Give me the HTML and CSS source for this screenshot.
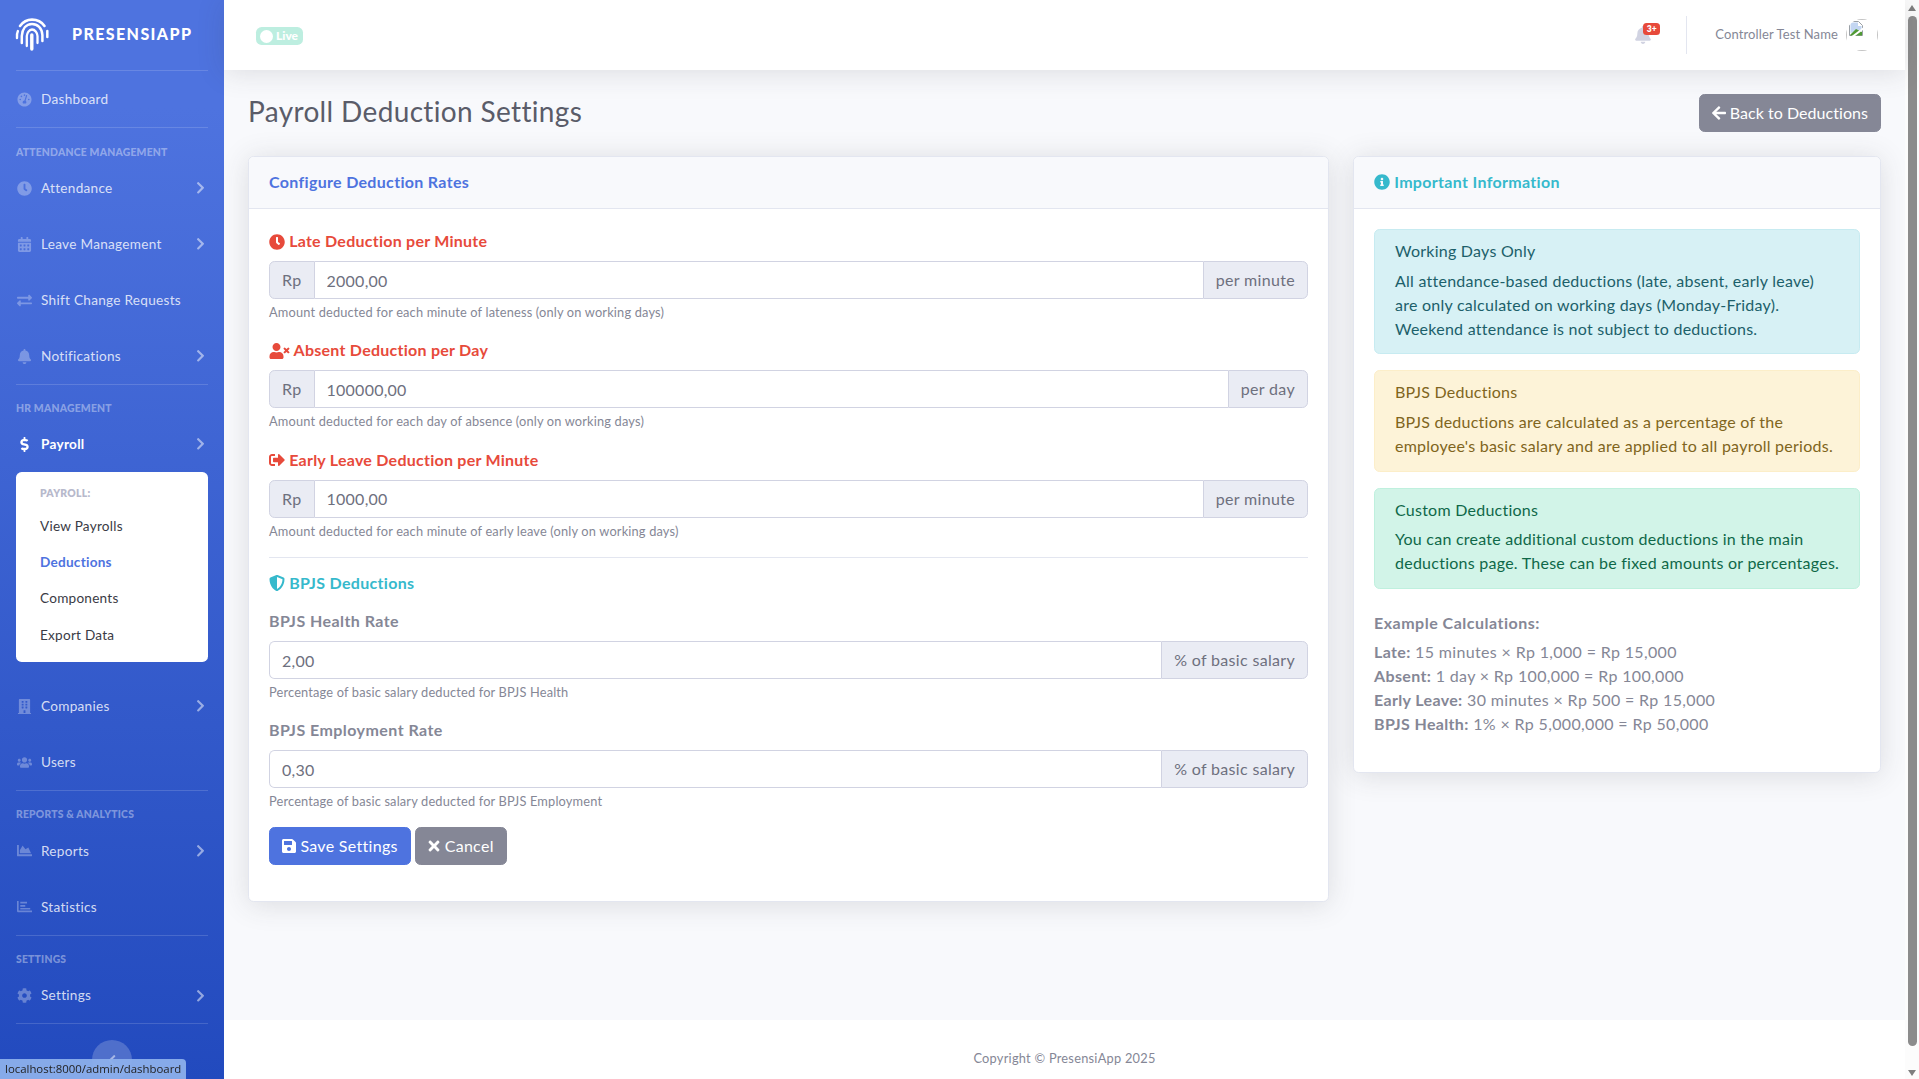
FILE: index.html
```html
<!DOCTYPE html>
<html lang="en">
<head>
<meta charset="utf-8">
<title>Payroll Deduction Settings</title>
<link rel="stylesheet" href="styles.css">
</head>
<body>
<svg class="defs" aria-hidden="true">
<symbol id="i-chev" viewBox="0 0 320 512"><path d="M285.476 272.971L91.132 467.314c-9.373 9.373-24.569 9.373-33.941 0l-22.667-22.667c-9.357-9.357-9.375-24.522-.04-33.901L188.505 256 34.484 101.255c-9.335-9.379-9.317-24.544.04-33.901l22.667-22.667c9.373-9.373 24.569-9.373 33.941 0L285.475 239.03c9.373 9.372 9.373 24.568.001 33.941z"/></symbol>
<symbol id="i-clock" viewBox="0 0 512 512"><path d="M256,8C119,8,8,119,8,256S119,504,256,504,504,393,504,256,393,8,256,8Zm92.49,313h0l-20,25a16,16,0,0,1-22.49,2.5h0l-67-49.72a40,40,0,0,1-15-31.23V112a16,16,0,0,1,16-16h32a16,16,0,0,1,16,16V256l58,42.5A16,16,0,0,1,348.49,321Z"/></symbol>
<symbol id="i-bell" viewBox="0 0 448 512"><path d="M224 512c35.32 0 63.97-28.65 63.97-64H160.03c0 35.35 28.65 64 63.97 64zm215.39-149.71c-19.32-20.76-55.47-51.99-55.47-154.29 0-77.7-54.48-139.9-127.94-155.16V32c0-17.67-14.32-32-31.98-32s-31.98 14.33-31.98 32v20.84C118.56 68.1 64.08 130.3 64.08 208c0 102.3-36.15 133.53-55.47 154.29-6 6.45-8.66 14.16-8.61 21.71.11 16.4 12.98 32 32.1 32h383.8c19.12 0 32-15.6 32.1-32 .05-7.55-2.61-15.27-8.61-21.71z"/></symbol>
<symbol id="i-save" viewBox="0 0 448 512"><path d="M433.941 129.941l-83.882-83.882A48 48 0 0 0 316.118 32H48C21.49 32 0 53.49 0 80v352c0 26.51 21.49 48 48 48h352c26.51 0 48-21.49 48-48V163.882a48 48 0 0 0-14.059-33.941zM224 416c-35.346 0-64-28.654-64-64 0-35.346 28.654-64 64-64s64 28.654 64 64c0 35.346-28.654 64-64 64zm96-304.52V212c0 6.627-5.373 12-12 12H76c-6.627 0-12-5.373-12-12V108c0-6.627 5.373-12 12-12h228.52c3.183 0 6.235 1.264 8.485 3.515l3.48 3.48A11.996 11.996 0 0 1 320 111.48z"/></symbol>
<symbol id="i-info" viewBox="0 0 512 512"><path d="M256 8C119.043 8 8 119.083 8 256c0 136.997 111.043 248 248 248s248-111.003 248-248C504 119.083 392.957 8 256 8zm0 110c23.196 0 42 18.804 42 42s-18.804 42-42 42-42-18.804-42-42 18.804-42 42-42zm56 254c0 6.627-5.373 12-12 12h-88c-6.627 0-12-5.373-12-12v-24c0-6.627 5.373-12 12-12h12v-64h-12c-6.627 0-12-5.373-12-12v-24c0-6.627 5.373-12 12-12h64c6.627 0 12 5.373 12 12v100h12c6.627 0 12 5.373 12 12v24z"/></symbol>
<symbol id="i-left" viewBox="0 0 448 512"><path d="M257.5 445.1l-22.2 22.2c-9.4 9.4-24.6 9.4-33.9 0L7 273c-9.4-9.4-9.4-24.6 0-33.9L201.4 44.7c9.4-9.4 24.6-9.4 33.9 0l22.2 22.2c9.5 9.5 9.3 25-.4 34.3L136.6 216H424c13.3 0 24 10.7 24 24v32c0 13.3-10.7 24-24 24H136.6l120.5 114.8c9.8 9.3 10 24.8.4 34.3z"/></symbol>
<symbol id="i-times" viewBox="0 0 352 512"><path d="M242.72 256l100.07-100.07c12.28-12.28 12.28-32.19 0-44.48l-22.24-22.24c-12.28-12.28-32.19-12.28-44.48 0L176 189.28 75.93 89.21c-12.28-12.28-32.19-12.28-44.48 0L9.21 111.45c-12.28 12.28-12.28 32.19 0 44.48L109.28 256 9.21 356.07c-12.28 12.28-12.28 32.19 0 44.48l22.24 22.24c12.28 12.28 32.2 12.28 44.48 0L176 322.72l100.07 100.07c12.28 12.28 32.2 12.28 44.48 0l22.24-22.24c12.28-12.28 12.28-32.19 0-44.48L242.72 256z"/></symbol>
<symbol id="i-out" viewBox="0 0 512 512"><path d="M497 273L329 441c-15 15-41 4.5-41-17v-96H152c-13.3 0-24-10.7-24-24v-96c0-13.3 10.7-24 24-24h136V88c0-21.4 25.9-32 41-17l168 168c9.3 9.4 9.3 24.6 0 34zM192 436v-40c0-6.6-5.4-12-12-12H96c-17.7 0-32-14.3-32-32V160c0-17.7 14.3-32 32-32h84c6.6 0 12-5.4 12-12V76c0-6.6-5.4-12-12-12H96c-53 0-96 43-96 96v192c0 53 43 96 96 96h84c6.6 0 12-5.4 12-12z"/></symbol>
<symbol id="i-userx" viewBox="0 0 640 512"><path d="M589.6 240l45.6-45.6c6.3-6.3 6.3-16.5 0-22.8l-22.8-22.8c-6.3-6.3-16.5-6.3-22.8 0L544 194.4l-45.6-45.6c-6.3-6.3-16.5-6.3-22.8 0l-22.8 22.8c-6.3 6.3-6.3 16.5 0 22.8l45.6 45.6-45.6 45.6c-6.3 6.3-6.3 16.5 0 22.8l22.8 22.8c6.3 6.3 16.5 6.3 22.8 0l45.6-45.6 45.6 45.6c6.3 6.3 16.5 6.3 22.8 0l22.8-22.8c6.3-6.3 6.3-16.5 0-22.8L589.6 240zM224 256c70.7 0 128-57.3 128-128S294.7 0 224 0 96 57.3 96 128s57.3 128 128 128zm89.6 32h-16.7c-22.2 10.2-46.9 16-72.9 16s-50.6-5.8-72.9-16h-16.7C60.2 288 0 348.2 0 422.4V464c0 26.5 21.5 48 48 48h352c26.5 0 48-21.5 48-48v-41.6c0-74.2-60.2-134.4-134.4-134.4z"/></symbol>
<symbol id="i-shield" viewBox="0 0 512 512"><path d="M466.5 83.7l-192-80a48.15 48.15 0 0 0-36.9 0l-192 80C27.7 91.1 16 108.6 16 128c0 198.5 114.5 335.7 221.5 380.3 11.8 4.9 25.1 4.9 36.9 0C360.1 472.6 496 349.3 496 128c0-19.4-11.7-36.9-29.5-44.3zM256.1 446.3l-.1-381 175.9 73.3c-3.3 151.4-82.1 261.1-175.8 307.7z"/></symbol>
<symbol id="i-gauge" viewBox="0 0 512 512"><path d="M256 16C123.5 16 16 123.5 16 256s107.5 240 240 240 240-107.5 240-240S388.5 16 256 16zm0 64a28 28 0 1 1 0 56 28 28 0 0 1 0-56zM110 284a28 28 0 1 1 0-56 28 28 0 0 1 0 56zm40-106a28 28 0 1 1 0-56 28 28 0 0 1 0 56zm196-46l-52 168c16 11 26 29 26 50 0 16-6 30-16 41H208c-10-11-16-25-16-41 0-35 28-63 63-64l52-166c3-11 15-17 26-14 11 4 17 15 13 26zm56 152a28 28 0 1 1 0-56 28 28 0 0 1 0 56z"/></symbol>
<symbol id="i-cal" viewBox="0 0 448 512"><path d="M0 464c0 26.5 21.5 48 48 48h352c26.5 0 48-21.5 48-48V192H0v272zm320-196c0-6.6 5.4-12 12-12h40c6.6 0 12 5.4 12 12v40c0 6.6-5.4 12-12 12h-40c-6.6 0-12-5.4-12-12v-40zm0 128c0-6.6 5.4-12 12-12h40c6.6 0 12 5.4 12 12v40c0 6.6-5.4 12-12 12h-40c-6.6 0-12-5.4-12-12v-40zM192 268c0-6.6 5.4-12 12-12h40c6.6 0 12 5.4 12 12v40c0 6.6-5.4 12-12 12h-40c-6.6 0-12-5.4-12-12v-40zm0 128c0-6.6 5.4-12 12-12h40c6.6 0 12 5.4 12 12v40c0 6.6-5.4 12-12 12h-40c-6.6 0-12-5.4-12-12v-40zM64 268c0-6.6 5.4-12 12-12h40c6.6 0 12 5.4 12 12v40c0 6.6-5.4 12-12 12H76c-6.6 0-12-5.4-12-12v-40zm0 128c0-6.6 5.4-12 12-12h40c6.6 0 12 5.4 12 12v40c0 6.6-5.4 12-12 12H76c-6.6 0-12-5.4-12-12v-40zM400 64h-48V16c0-8.8-7.2-16-16-16h-32c-8.8 0-16 7.2-16 16v48H160V16c0-8.8-7.2-16-16-16h-32c-8.8 0-16 7.2-16 16v48H48C21.5 64 0 85.5 0 112v48h448v-48c0-26.5-21.5-48-48-48z"/></symbol>
<symbol id="i-swap" viewBox="0 0 512 512"><path d="M0 168v-16c0-13.255 10.745-24 24-24h360V80c0-21.367 25.899-32.042 40.971-16.971l80 80c9.372 9.373 9.372 24.569 0 33.941l-80 80C409.956 271.982 384 261.456 384 240v-48H24c-13.255 0-24-10.745-24-24zm488 152H128v-48c0-21.314-25.862-32.08-40.971-16.971l-80 80c-9.372 9.373-9.372 24.569 0 33.941l80 80C102.057 463.997 128 453.437 128 432v-48h360c13.255 0 24-10.745 24-24v-16c0-13.255-10.745-24-24-24z"/></symbol>
<symbol id="i-dollar" viewBox="0 0 288 512"><path d="M209.2 233.4l-108-31.6C88.7 198.2 80 186.5 80 173.5c0-16.3 13.2-29.5 29.5-29.5h66.3c12.2 0 24.2 3.7 34.2 10.5 6.1 4.1 14.3 3.1 19.5-2l34.8-34c7.1-6.9 6.1-18.4-1.8-24.5C238 74.8 207.4 64.1 176 64V16c0-8.8-7.2-16-16-16h-32c-8.8 0-16 7.2-16 16v48h-2.5C45.8 64-5.4 118.7.5 183.6c4.2 46.1 39.4 83.6 83.8 96.6l102.5 30c12.5 3.7 21.2 15.3 21.2 28.3 0 16.3-13.2 29.5-29.5 29.5h-66.3C100 368 88 364.3 78 357.5c-6.1-4.1-14.3-3.1-19.5 2l-34.8 34c-7.1 6.9-6.1 18.4 1.8 24.5 24.5 19.2 55.1 29.9 86.5 30v48c0 8.8 7.2 16 16 16h32c8.8 0 16-7.2 16-16v-48.2c46.6-.9 90.3-28.6 105.7-72.7 21.5-61.6-14.6-124.8-72.5-141.7z"/></symbol>
<symbol id="i-build" viewBox="0 0 448 512"><path d="M436 480h-20V24c0-13.255-10.745-24-24-24H56C42.745 0 32 10.745 32 24v456H12c-6.627 0-12 5.373-12 12v20h448v-20c0-6.627-5.373-12-12-12zM128 76c0-6.627 5.373-12 12-12h40c6.627 0 12 5.373 12 12v40c0 6.627-5.373 12-12 12h-40c-6.627 0-12-5.373-12-12V76zm0 96c0-6.627 5.373-12 12-12h40c6.627 0 12 5.373 12 12v40c0 6.627-5.373 12-12 12h-40c-6.627 0-12-5.373-12-12v-40zm52 148h-40c-6.627 0-12-5.373-12-12v-40c0-6.627 5.373-12 12-12h40c6.627 0 12 5.373 12 12v40c0 6.627-5.373 12-12 12zm76 160h-64v-84c0-6.627 5.373-12 12-12h40c6.627 0 12 5.373 12 12v84zm64-172c0 6.627-5.373 12-12 12h-40c-6.627 0-12-5.373-12-12v-40c0-6.627 5.373-12 12-12h40c6.627 0 12 5.373 12 12v40zm0-96c0 6.627-5.373 12-12 12h-40c-6.627 0-12-5.373-12-12v-40c0-6.627 5.373-12 12-12h40c6.627 0 12 5.373 12 12v40zm0-96c0 6.627-5.373 12-12 12h-40c-6.627 0-12-5.373-12-12V76c0-6.627 5.373-12 12-12h40c6.627 0 12 5.373 12 12v40z"/></symbol>
<symbol id="i-users" viewBox="0 0 640 512"><path d="M96 224c35.3 0 64-28.7 64-64s-28.7-64-64-64-64 28.7-64 64 28.7 64 64 64zm448 0c35.3 0 64-28.7 64-64s-28.7-64-64-64-64 28.7-64 64 28.7 64 64 64zm32 32h-64c-17.6 0-33.5 7.1-45.1 18.6 40.3 22.1 68.9 62 75.1 109.4h66c17.7 0 32-14.3 32-32v-32c0-35.3-28.7-64-64-64zm-256 0c61.9 0 112-50.1 112-112S381.9 32 320 32 208 82.1 208 144s50.1 112 112 112zm76.8 32h-8.3c-20.8 10-43.9 16-68.5 16s-47.6-6-68.5-16h-8.3C179.6 288 128 339.6 128 403.2V432c0 26.5 21.5 48 48 48h288c26.5 0 48-21.5 48-48v-28.8c0-63.6-51.6-115.2-115.2-115.2zm-223.7-13.4C161.5 263.1 145.6 256 128 256H64c-35.3 0-64 28.7-64 64v32c0 17.7 14.3 32 32 32h65.9c6.3-47.4 34.9-87.3 75.2-109.4z"/></symbol>
<symbol id="i-area" viewBox="0 0 512 512"><path d="M500 384c6.6 0 12 5.4 12 12v40c0 6.6-5.4 12-12 12H12c-6.6 0-12-5.4-12-12V76c0-6.6 5.4-12 12-12h40c6.6 0 12 5.4 12 12v308h436zM372.7 159.5L288 216l-85.3-113.7c-5.1-6.8-15.5-6.3-19.9 1L96 248v104h384l-89.9-187.8c-3.2-6.5-11.4-8.7-17.4-4.7z"/></symbol>
<symbol id="i-bars" viewBox="0 0 512 512"><path d="M0 64h56v328h456v56H28c-15 0-28-13-28-28zM112 96h230v56H112zM112 208h170v56H112zM112 304h340v56H112z"/></symbol>
<symbol id="i-cog" viewBox="0 0 512 512"><path d="M487.4 315.7l-42.6-24.6c4.3-23.2 4.3-47 0-70.2l42.6-24.6c4.9-2.8 7.1-8.6 5.5-14-11.1-35.6-30-67.8-54.7-94.6-3.8-4.1-10-5.1-14.8-2.3L380.8 110c-17.9-15.4-38.5-27.3-60.8-35.1V25.8c0-5.6-3.9-10.5-9.4-11.7-36.7-8.2-74.3-7.8-109.2 0-5.5 1.2-9.4 6.1-9.4 11.7V75c-22.2 7.9-42.8 19.8-60.8 35.1L88.7 85.5c-4.9-2.8-11-1.9-14.8 2.3-24.7 26.7-43.6 58.9-54.7 94.6-1.7 5.4.6 11.2 5.5 14L67.3 221c-4.3 23.2-4.3 47 0 70.2l-42.6 24.6c-4.9 2.8-7.1 8.6-5.5 14 11.1 35.6 30 67.8 54.7 94.6 3.8 4.1 10 5.1 14.8 2.3l42.6-24.6c17.9 15.4 38.5 27.3 60.8 35.1v49.2c0 5.6 3.9 10.5 9.4 11.7 36.7 8.2 74.3 7.8 109.2 0 5.5-1.2 9.4-6.1 9.4-11.7v-49.2c22.2-7.9 42.8-19.8 60.8-35.1l42.6 24.6c4.9 2.8 11 1.9 14.8-2.3 24.7-26.7 43.6-58.9 54.7-94.6 1.5-5.5-.7-11.3-5.6-14.1zM256 336c-44.1 0-80-35.9-80-80s35.9-80 80-80 80 35.9 80 80-35.9 80-80 80z"/></symbol>
</svg>

<div class="app">
  <aside class="sidebar">
    <a class="brand">
      <svg class="brand-logo" viewBox="0 0 34 33" fill="none" stroke="#fff" stroke-linecap="round">
        <path d="M2 20c-.3-2.500 0-5 .9-7" stroke-width="2.400"/>
        <path d="M5 8C8 3.800 12 1.600 17 1.600S26.500 3.600 29.500 8" stroke-width="2.600"/>
        <path d="M32.300 13v6" stroke-width="2.500"/>
        <path d="M6.800 25v-7C7.300 11 11 6 17 6c5.500 0 10 4 10.400 11v6" stroke-width="2.500"/>
        <path d="M11.800 28V18c.3-3 2.300-6.500 5.200-6.500s5.300 3 5.500 6.500v7" stroke-width="2.300"/>
        <path d="M16.800 17v14" stroke-width="3.400"/>
      </svg>
      <span class="brand-text">PresensiApp</span>
    </a>
    <hr class="side-hr">
    <a class="nav-link"><svg class="nav-ico"><use href="#i-gauge"/></svg><span class="nav-label">Dashboard</span></a>
    <hr class="side-hr">
    <div class="side-head side-head-tall">Attendance Management</div>
    <a class="nav-link"><svg class="nav-ico"><use href="#i-clock"/></svg><span class="nav-label">Attendance</span><svg class="nav-chev"><use href="#i-chev"/></svg></a>
    <a class="nav-link"><svg class="nav-ico"><use href="#i-cal"/></svg><span class="nav-label">Leave Management</span><svg class="nav-chev"><use href="#i-chev"/></svg></a>
    <a class="nav-link"><svg class="nav-ico"><use href="#i-swap"/></svg><span class="nav-label">Shift Change Requests</span></a>
    <a class="nav-link"><svg class="nav-ico"><use href="#i-bell"/></svg><span class="nav-label">Notifications</span><svg class="nav-chev"><use href="#i-chev"/></svg></a>
    <hr class="side-hr">
    <div class="side-head side-head-short">HR Management</div>
    <a class="nav-link is-active"><svg class="nav-ico"><use href="#i-dollar"/></svg><span class="nav-label">Payroll</span><svg class="nav-chev"><use href="#i-chev"/></svg></a>
    <div class="submenu">
      <div class="submenu-head">Payroll:</div>
      <a class="submenu-item">View Payrolls</a>
      <a class="submenu-item is-current">Deductions</a>
      <a class="submenu-item">Components</a>
      <a class="submenu-item">Export Data</a>
    </div>
    <a class="nav-link"><svg class="nav-ico"><use href="#i-build"/></svg><span class="nav-label">Companies</span><svg class="nav-chev"><use href="#i-chev"/></svg></a>
    <a class="nav-link"><svg class="nav-ico"><use href="#i-users"/></svg><span class="nav-label">Users</span></a>
    <hr class="side-hr">
    <div class="side-head">Reports &amp; Analytics</div>
    <a class="nav-link"><svg class="nav-ico"><use href="#i-area"/></svg><span class="nav-label">Reports</span><svg class="nav-chev"><use href="#i-chev"/></svg></a>
    <a class="nav-link"><svg class="nav-ico"><use href="#i-bars"/></svg><span class="nav-label">Statistics</span></a>
    <hr class="side-hr">
    <div class="side-head">Settings</div>
    <a class="nav-link"><svg class="nav-ico"><use href="#i-cog"/></svg><span class="nav-label">Settings</span><svg class="nav-chev"><use href="#i-chev"/></svg></a>
    <hr class="side-hr">
    <div class="toggle-wrap"><button class="toggle" type="button"><svg class="toggle-ico" viewBox="0 0 320 512"><use href="#i-chev" transform="rotate(180 160 256)"/></svg></button></div>
  </aside>

  <div class="main">
    <header class="topbar">
      <span class="live"><span class="live-dot"></span>Live</span>
      <div class="top-right">
        <a class="bell"><svg class="bell-ico"><use href="#i-bell"/></svg><span class="bell-badge">3+</span></a>
        <span class="top-divider"></span>
        <span class="user-name">Controller Test Name</span>
        <span class="avatar">
          <span class="avatar-box">
            <svg class="broken" viewBox="0 0 16 16">
              <path d="M1.5 .5h9l4 4v10h-13z" fill="#fff" stroke="#9aa0a6" stroke-width="1"/>
              <path d="M2.500 1.500h7.500v3.500h3.500v4l-11 3z" fill="#c3d6f2"/>
              <path d="M2 14l6-6 6 3v3.500H2z" fill="#4f9a33"/>
              <path d="M4 16L16 7" stroke="#fff" stroke-width="2"/>
            </svg>
          </span>
        </span>
      </div>
    </header>

    <main class="content">
      <div class="page-head">
        <h1 class="page-title">Payroll Deduction Settings</h1>
        <a class="btn btn-grey btn-back"><svg class="btn-ico"><use href="#i-left"/></svg> Back to Deductions</a>
      </div>
      <div class="columns">
        <section class="card card-form">
          <div class="card-head"><h2 class="card-title">Configure Deduction Rates</h2></div>
          <form class="card-body form-body">
            <div class="group">
              <label class="label label-red"><svg class="lab-ico"><use href="#i-clock"/></svg> Late Deduction per Minute</label>
              <div class="input-group"><span class="addon addon-l">Rp</span><input class="field" value="2000,00"><span class="addon addon-r">per minute</span></div>
              <small class="help">Amount deducted for each minute of lateness (only on working days)</small>
            </div>
            <div class="group">
              <label class="label label-red"><svg class="lab-ico lab-ico-wide"><use href="#i-userx"/></svg> Absent Deduction per Day</label>
              <div class="input-group"><span class="addon addon-l">Rp</span><input class="field" value="100000,00"><span class="addon addon-r">per day</span></div>
              <small class="help">Amount deducted for each day of absence (only on working days)</small>
            </div>
            <div class="group">
              <label class="label label-red"><svg class="lab-ico"><use href="#i-out"/></svg> Early Leave Deduction per Minute</label>
              <div class="input-group"><span class="addon addon-l">Rp</span><input class="field" value="1000,00"><span class="addon addon-r">per minute</span></div>
              <small class="help">Amount deducted for each minute of early leave (only on working days)</small>
            </div>
            <hr class="rule">
            <h3 class="sub-title"><svg class="lab-ico"><use href="#i-shield"/></svg> BPJS Deductions</h3>
            <div class="group">
              <label class="label label-plain">BPJS Health Rate</label>
              <div class="input-group"><input class="field field-first" value="2,00"><span class="addon addon-r">% of basic salary</span></div>
              <small class="help">Percentage of basic salary deducted for BPJS Health</small>
            </div>
            <div class="group">
              <label class="label label-plain">BPJS Employment Rate</label>
              <div class="input-group"><input class="field field-first" value="0,30"><span class="addon addon-r">% of basic salary</span></div>
              <small class="help">Percentage of basic salary deducted for BPJS Employment</small>
            </div>
            <div class="actions">
              <button class="btn btn-blue" type="button"><svg class="btn-ico"><use href="#i-save"/></svg> Save Settings</button>
              <button class="btn btn-grey" type="button"><svg class="btn-ico btn-ico-x"><use href="#i-times"/></svg> Cancel</button>
            </div>
          </form>
        </section>

        <section class="card card-info">
          <div class="card-head"><h2 class="card-title card-title-teal"><svg class="lab-ico"><use href="#i-info"/></svg> Important Information</h2></div>
          <div class="card-body">
            <div class="alert alert-info">
              <h4 class="alert-title">Working Days Only</h4>
              <p class="alert-text">All attendance-based deductions (late, absent, early leave)<br>are only calculated on working days (Monday-Friday).<br>Weekend attendance is not subject to deductions.</p>
            </div>
            <div class="alert alert-warn">
              <h4 class="alert-title">BPJS Deductions</h4>
              <p class="alert-text">BPJS deductions are calculated as a percentage of the<br>employee's basic salary and are applied to all payroll periods.</p>
            </div>
            <div class="alert alert-ok">
              <h4 class="alert-title">Custom Deductions</h4>
              <p class="alert-text">You can create additional custom deductions in the main<br>deductions page. These can be fixed amounts or percentages.</p>
            </div>
            <h4 class="example-title">Example Calculations:</h4>
            <p class="example">
              <strong>Late:</strong> 15 minutes × Rp 1,000 = Rp 15,000<br>
              <strong>Absent:</strong> 1 day × Rp 100,000 = Rp 100,000<br>
              <strong>Early Leave:</strong> 30 minutes × Rp 500 = Rp 15,000<br>
              <strong>BPJS Health:</strong> 1% × Rp 5,000,000 = Rp 50,000
            </p>
          </div>
        </section>
      </div>
    </main>

    <footer class="footer">Copyright © PresensiApp 2025</footer>
  </div>

  <div class="scrollbar">
    <span class="arrow arrow-up"></span>
    <span class="thumb"></span>
    <span class="arrow arrow-down"></span>
  </div>
</div>
<div class="status">localhost:8000/admin/dashboard</div>
</body>
</html>
```
FILE: styles.css
```css
* { box-sizing: border-box; }
html, body { margin: 0; height: 100%; overflow: hidden; }
body {
  font-family: "Lato", "Noto Sans", sans-serif;
  font-size: 16px;
  line-height: 1.5;
  color: #858796;
  background: #f8f9fc;
  letter-spacing: .25px;
}
.defs { position: absolute; width: 0; height: 0; }
.app { display: flex; height: 1079px; }

/* sidebar */
.sidebar {
  flex: 0 0 224px;
  height: 1079px;
  overflow: hidden;
  background: linear-gradient(180deg, #4e73df 10%, #224abe 100%);
  color: rgba(255,255,255,.8);
  padding: 0 16px;
}
.brand { display: flex; align-items: center; height: 70px; margin: 0 -16px; padding-left: 15px; }
.brand-logo { width: 34px; height: 33px; margin-top: -2px; flex: none; }
.brand-text { margin-left: 23px; margin-top: -2px; color: #fff; font-weight: 900; font-size: 16px; letter-spacing: 1.4px; text-transform: uppercase; }
.side-hr { height: 1px; margin: 0; border: 0; background: rgba(255,255,255,.15); }
.side-head { margin-top: 16px; font-size: 10.4px; line-height: 15.6px; font-weight: 900; text-transform: uppercase; color: rgba(255,255,255,.4); letter-spacing: .2px; }
.side-head-tall { line-height: 16.2px; }
.side-head-short { line-height: 15px; }
.nav-link { display: flex; align-items: center; height: 56px; font-size: 13.6px; }
.nav-ico { width: 15px; height: 15px; margin-left: 1px; flex: none; fill: rgba(255,255,255,.3); }
.nav-label { margin-left: 9px; flex: 1; letter-spacing: .28px; }
.nav-chev { width: 9px; height: 13.6px; margin-right: 3px; flex: none; fill: rgba(255,255,255,.5); }
.is-active .nav-label { color: #fff; font-weight: 700; }
.is-active .nav-ico { fill: #fff; }
.submenu { height: 190px; margin-bottom: 16px; padding: 8px 0; background: #fff; border-radius: 5.6px; }
.submenu-head { padding: 6px 24px; font-size: 10.4px; line-height: 15.6px; font-weight: 800; text-transform: uppercase; color: #b7b9cc; }
.submenu-item { display: block; padding: 8px 24px; font-size: 13.6px; line-height: 20.3px; color: #3a3b45; letter-spacing: .24px; }
.submenu-item.is-current { color: #4e73df; font-weight: 700; }
.toggle-wrap { display: flex; justify-content: center; margin-top: 16px; }
.toggle { width: 40px; height: 40px; padding: 0; border: 0; border-radius: 50%; background: rgba(255,255,255,.2); display: flex; align-items: center; justify-content: center; }
.toggle-ico { width: 8px; height: 13px; fill: rgba(255,255,255,.5); }

/* main */
.main { flex: 1; min-width: 0; display: flex; flex-direction: column; height: 1079px; }
.topbar {
  position: relative; z-index: 2;
  flex: 0 0 70px;
  display: flex; align-items: center; justify-content: space-between;
  padding: 0 27px 0 32px;
  background: #fff;
  box-shadow: 0 2.4px 28px 0 rgba(58,59,69,.15);
}
.live { display: flex; align-items: center; width: 47px; height: 18px; margin-top: 2px; padding-left: 4px; border-radius: 5.6px; background: #bdeee0; color: #fff; font-size: 12px; font-weight: 900; letter-spacing: 0; }
.live-dot { width: 13px; height: 13px; border-radius: 50%; background: #fff; margin-right: 3px; }
.top-right { display: flex; align-items: center; }
.bell { position: relative; display: block; width: 16px; height: 18px; }
.bell-ico { display: block; width: 16px; height: 18px; fill: #d1d3e2; }
.bell-badge { position: absolute; left: 8px; top: -3px; width: 17px; height: 12px; border-radius: 3.5px; background: #e74a3b; color: #fff; font-size: 8.5px; line-height: 12px; font-weight: 800; text-align: center; letter-spacing: 0; }
.top-divider { width: 1px; height: 38px; margin: 0 28px 0 35px; background: #e3e6f0; }
.user-name { font-size: 13px; letter-spacing: .12px; color: #858796; margin-right: 8px; }
.avatar { display: block; width: 32px; height: 32px; border-radius: 50%; overflow: hidden; }
.avatar-box { display: block; width: 32px; height: 32px; border: 1px solid #c4c4c4; padding: 1px; }
.broken { display: block; width: 16px; height: 16px; }

.content { flex: 1; min-height: 0; padding: 24px 24px 0; }
.page-head { display: flex; align-items: center; justify-content: space-between; margin-bottom: 24px; }
.page-title { margin: 0; padding-bottom: 2px; font-size: 28px; line-height: 33.6px; font-weight: 400; color: #5a5c69; letter-spacing: .35px; }
.columns { display: flex; gap: 24px; align-items: flex-start; }
.card { background: #fff; border: 1px solid #e3e6f0; border-radius: 5.6px; box-shadow: 0 2.4px 28px 0 rgba(58,59,69,.15); }
.card-form { flex: 0 0 1081px; }
.card-info { flex: 1; min-width: 0; }
.card-head { padding: 14.5px 20px 17.5px; background: #f8f9fc; border-bottom: 1px solid #e3e6f0; border-radius: 5px 5px 0 0; }
.card-title { margin: 0; font-size: 16px; line-height: 19.2px; font-weight: 700; color: #4e73df; letter-spacing: .32px; }
.card-title-teal { color: #36b9cc; }
.card-body { padding: 20px; }
.form-body { padding-bottom: 36px; }

.group { margin-bottom: 16px; }
.label { display: block; margin-bottom: 9px; font-size: 16px; line-height: 23px; font-weight: 700; color: #858796; }
.label-red { color: #e74a3b; }
.label-plain { letter-spacing: .45px; }
.lab-ico { width: 16px; height: 16px; fill: currentColor; vertical-align: -2.5px; }
.lab-ico-wide { width: 21px; }
.input-group { display: flex; height: 38px; }
.addon { display: flex; align-items: center; padding: 0 12px; background: #eaecf4; border: 1px solid #d1d3e2; color: #6e707e; letter-spacing: .32px; }
.addon-l { border-radius: 5.6px 0 0 5.6px; }
.addon-r { border-radius: 0 5.6px 5.6px 0; }
.field { flex: 1; min-width: 0; height: 38px; padding: 6px 12px; border: 1px solid #d1d3e2; border-width: 1px 0; background: #fff; color: #6e707e; font: inherit; letter-spacing: inherit; outline: 0; }
.field-first { border-left-width: 1px; border-radius: 5.6px 0 0 5.6px; }
.help { display: block; margin-top: 4px; font-size: 12.8px; line-height: 19.2px; color: #858796; letter-spacing: .17px; }
.rule { height: 1px; margin: 0 0 15px; border: 0; background: #e3e6f0; }
.sub-title { margin: 0 0 17px; font-size: 16px; line-height: 19.2px; font-weight: 700; color: #36b9cc; letter-spacing: .32px; }
.actions { display: flex; gap: 4.5px; }
.btn { display: inline-flex; align-items: center; height: 38px; padding: 0 12px; border: 1px solid transparent; border-radius: 5.6px; color: #fff; font: inherit; letter-spacing: .3px; white-space: pre; }
.btn-blue { background: #4e73df; border-color: #4e73df; }
.btn-grey { background: #858796; border-color: #858796; }
.btn-back { letter-spacing: .05px; padding-bottom: 1px; }
.btn-ico { width: 14px; height: 16px; fill: #fff; flex: none; }
.btn-ico-x { width: 12px; }

.alert { margin-bottom: 16px; padding: 11px 20px 12.5px; border: 1px solid transparent; border-radius: 5.6px; }
.alert-title { margin: 0 0 8.5px; font-size: 16px; line-height: 19.2px; font-weight: 400; }
.alert-text { margin: 0; line-height: 24px; white-space: nowrap; }
.alert-info { background: #d7f1f5; border-color: #c7ebf1; color: #1c606a; }
.alert-warn { background: #fdf3d8; border-color: #fceec9; color: #806520; }
.alert-ok { background: #d2f4e8; border-color: #bff0de; color: #0f6848; }
.example-title { margin: 24px 0 8px; font-size: 16px; line-height: 19.2px; font-weight: 700; color: #858796; letter-spacing: .5px; }
.example { margin: 0 0 16px; line-height: 24px; letter-spacing: .35px; }

.footer { flex: 0 0 59px; display: flex; align-items: center; justify-content: center; background: #fff; font-size: 12.8px; color: #858796; padding-top: 18px; }

.scrollbar { flex: 0 0 14px; height: 1079px; background: #fcfcfc; display: flex; flex-direction: column; align-items: center; }
.thumb { display: block; width: 9px; height: 1030px; margin-top: 1px; border-radius: 5px; background: #8c8c8c; flex: none; }
.arrow { display: block; flex: none; width: 0; height: 0; border-left: 4.5px solid transparent; border-right: 4.5px solid transparent; }
.arrow-up { margin-top: 5px; border-bottom: 6px solid #7f7f7f; margin-bottom: 4px; }
.arrow-down { margin-top: 24px; border-top: 6px solid #7f7f7f; }

.status { position: fixed; left: 0; bottom: 0; height: 20px; padding: 0 5px; background: rgba(140,175,235,.95); border-top-right-radius: 4px; color: #222; font-family: "Open Sans", sans-serif; font-size: 11.4px; line-height: 20px; letter-spacing: 0; }
```
